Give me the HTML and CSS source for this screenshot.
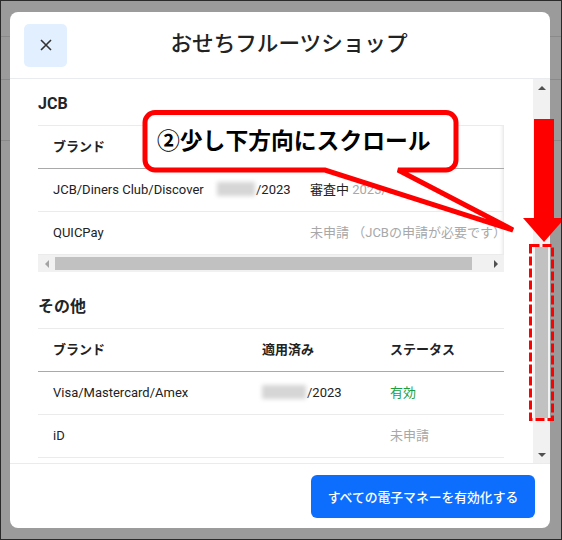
FILE: index.html
```html
<!DOCTYPE html>
<html lang="ja">
<head>
<meta charset="utf-8">
<title>おせちフルーツショップ</title>
<link rel="stylesheet" href="styles.css">
</head>
<body>
<div class="screen">
  <div class="modal">
    <div class="modal-header">
      <button class="close" aria-label="閉じる">
        <svg width="12" height="12" viewBox="0 0 12 12"><path d="M1 1L11 11M11 1L1 11" stroke="#333" stroke-width="1.6" fill="none"/></svg>
      </button>
      <h1 class="title">おせちフルーツショップ</h1>
    </div>
    <div class="modal-body">
      <div class="content">
        <h2 class="section">JCB</h2>
        <div class="xscroll">
          <table class="t t1">
            <thead>
              <tr><th class="w1">ブランド</th><th class="w2">適用済み</th><th class="w3">ステータス</th></tr>
            </thead>
            <tbody>
              <tr><td>JCB/Diners Club/Discover</td><td><span class="blur b1"></span>/2023</td><td>審査中 <span class="muted">2023/12/20</span></td></tr>
              <tr><td>QUICPay</td><td></td><td class="muted">未申請 （JCBの申請が必要です）</td></tr>
            </tbody>
          </table>
          <div class="hbar">
            <span class="harrow left"></span>
            <div class="htrack"><div class="hthumb"></div></div>
            <span class="harrow right"></span>
          </div>
        </div>
        <h2 class="section second">その他</h2>
        <table class="t t2">
          <thead>
            <tr><th class="v1">ブランド</th><th class="v2">適用済み</th><th class="v3">ステータス</th></tr>
          </thead>
          <tbody>
            <tr><td>Visa/Mastercard/Amex</td><td><span class="blur b2"></span>/2023</td><td class="ok">有効</td></tr>
            <tr><td>iD</td><td></td><td class="muted">未申請</td></tr>
          </tbody>
        </table>
      </div>
      <div class="vbar">
        <span class="varrow up"></span>
        <div class="vtrack"><div class="vthumb"></div></div>
        <span class="varrow down"></span>
      </div>
    </div>
    <div class="modal-footer">
      <button class="primary">すべての電子マネーを有効化する</button>
    </div>
  </div>

  <div class="annot">
    <svg class="annot-svg" width="562" height="540" viewBox="0 0 562 540">
      <path d="M155 112.5H446A10 10 0 0 1 456 122.5V160A10 10 0 0 1 446 170H398L513 230L325 170H155A10 10 0 0 1 145 160V122.5A10 10 0 0 1 155 112.5Z" fill="#fff" stroke="#ff0000" stroke-width="5"/>
      <polygon points="534,119 554,119 554,218 565,218 544,242 523,218 534,218" fill="#ff0000"/>
      <rect x="530.5" y="245.5" width="22" height="174" fill="none" stroke="#ff0000" stroke-width="3" stroke-dasharray="9 3"/>
    </svg>
    <div class="callout-text">②少し下方向にスクロール</div>
  </div>
</div>
</body>
</html>
```
FILE: styles.css
```css
html, body {
  margin: 0;
  padding: 0;
}

.screen {
  position: relative;
  width: 562px;
  height: 540px;
  box-sizing: border-box;
  border: 1px solid #2a2a2a;
  padding: 11px 11px 0 9px;
  overflow: hidden;
  background:
    linear-gradient(#8a8a8a, #8a8a8a) 0 35px / 100% 1px no-repeat,
    linear-gradient(#8a8a8a, #8a8a8a) 0 78px / 100% 1px no-repeat,
    linear-gradient(#8a8a8a, #8a8a8a) 0 139px / 100% 1px no-repeat,
    #9b9b9b;
  font-family: Roboto, "Noto Sans CJK JP", sans-serif;
  color: #212529;
}

.modal {
  width: 540px;
  height: 516px;
  background: #fff;
  border-radius: 8px;
  display: flex;
  flex-direction: column;
  overflow: hidden;
}

.modal-header {
  height: 66px;
  flex-shrink: 0;
  border-bottom: 1px solid #e9ecef;
  display: flex;
  align-items: center;
  padding: 0 39px 0 14px;
}

.close {
  width: 43px;
  height: 43px;
  padding: 0;
  border: 0;
  border-radius: 5px;
  background: #e2efff;
  display: flex;
  align-items: center;
  justify-content: center;
  flex-shrink: 0;
}

.title {
  flex: 1;
  margin: 0;
  padding-bottom: 6px;
  text-align: center;
  font-family: "Noto Sans CJK JP", sans-serif;
  font-size: 21.6px;
  font-weight: 500;
  line-height: 1;
  color: #222;
}

.modal-body {
  height: 384px;
  flex-shrink: 0;
  display: flex;
}

.content {
  flex: 1;
  min-width: 0;
  overflow: hidden;
  padding: 13px 29px 0 28px;
}

.section {
  margin: 0 0 9px;
  font-size: 16px;
  line-height: 24px;
  font-weight: 700;
  color: #212529;
  font-family: Roboto, "Noto Sans CJK JP", sans-serif;
}

.section.second {
  margin-top: 23px;
}

.xscroll {
  width: 466px;
  overflow: hidden;
  box-shadow: inset -5px 0 5px -5px rgba(0, 0, 0, 0.18);
}

.t {
  border-collapse: collapse;
  table-layout: fixed;
  font-size: 13px;
  line-height: 22px;
}

.t1 {
  width: 483px;
}

.t2 {
  width: 466px;
}

.t th,
.t td {
  box-sizing: border-box;
  padding: 10px 8px;
  text-align: left;
  white-space: nowrap;
  vertical-align: middle;
}

.t th:first-child,
.t td:first-child {
  padding-left: 15px;
}

.t th {
  font-weight: 700;
  color: #222;
  border-top: 1px solid #ebebeb;
  border-bottom: 1px solid #a9a9a9;
}

.t td {
  border-bottom: 1px solid #ebebeb;
  color: #222;
}

.w1 { width: 171px; }
.w2 { width: 93px; }
.w3 { width: 219px; }

.v1 { width: 216px; }
.v2 { width: 128px; }
.v3 { width: 122px; }

.t .muted {
  color: #a8a8a8;
}

.t .ok {
  color: #1d9e3e;
}

.blur {
  display: inline-block;
  height: 14px;
  vertical-align: -2px;
  background: #d6d6d6;
  filter: blur(2px);
  margin-right: 1px;
}

.b1 { width: 38px; }
.b2 { width: 44px; }

.hbar {
  height: 17px;
  background: #f1f1f1;
  display: flex;
  align-items: center;
}

.harrow {
  width: 17px;
  height: 17px;
  display: flex;
  align-items: center;
  justify-content: center;
  flex-shrink: 0;
}

.harrow::before {
  content: "";
  border-top: 4px solid transparent;
  border-bottom: 4px solid transparent;
}

.harrow.left::before {
  border-right: 4px solid #a3a3a3;
}

.harrow.right::before {
  border-left: 4px solid #505050;
}

.htrack {
  flex: 1;
  height: 17px;
  display: flex;
  align-items: center;
}

.hthumb {
  width: 417px;
  height: 13px;
  background: #c1c1c1;
}

.vbar {
  width: 17px;
  flex-shrink: 0;
  background: #f1f1f1;
  display: flex;
  flex-direction: column;
}

.varrow {
  height: 17px;
  display: flex;
  align-items: center;
  justify-content: center;
  flex-shrink: 0;
}

.varrow::before {
  content: "";
  border-left: 4px solid transparent;
  border-right: 4px solid transparent;
}

.varrow.up::before {
  border-bottom: 4px solid #505050;
}

.varrow.down::before {
  border-top: 4px solid #505050;
}

.vtrack {
  flex: 1;
  padding-top: 151px;
}

.vthumb {
  height: 171px;
  margin: 0 2px;
  background: #c1c1c1;
}

.modal-footer {
  flex: 1;
  border-top: 1px solid #e9ecef;
  display: flex;
  justify-content: flex-end;
  align-items: flex-start;
  padding: 11px 15px 0 0;
}

.primary {
  width: 224px;
  height: 43px;
  border: 0;
  border-radius: 6px;
  background: #0d6efd;
  color: #fff;
  font-family: "Noto Sans CJK JP", sans-serif;
  font-size: 12.8px;
  font-weight: 500;
  padding: 0;
}

.annot {
  position: absolute;
  left: -1px;
  top: -1px;
  width: 562px;
  height: 540px;
  pointer-events: none;
}

.annot-svg {
  display: block;
}

.callout-text {
  position: absolute;
  left: 157px;
  top: 126px;
  font-family: "Noto Sans CJK JP", sans-serif;
  font-size: 22.8px;
  line-height: 28px;
  font-weight: 700;
  color: #000;
  white-space: nowrap;
}
```
